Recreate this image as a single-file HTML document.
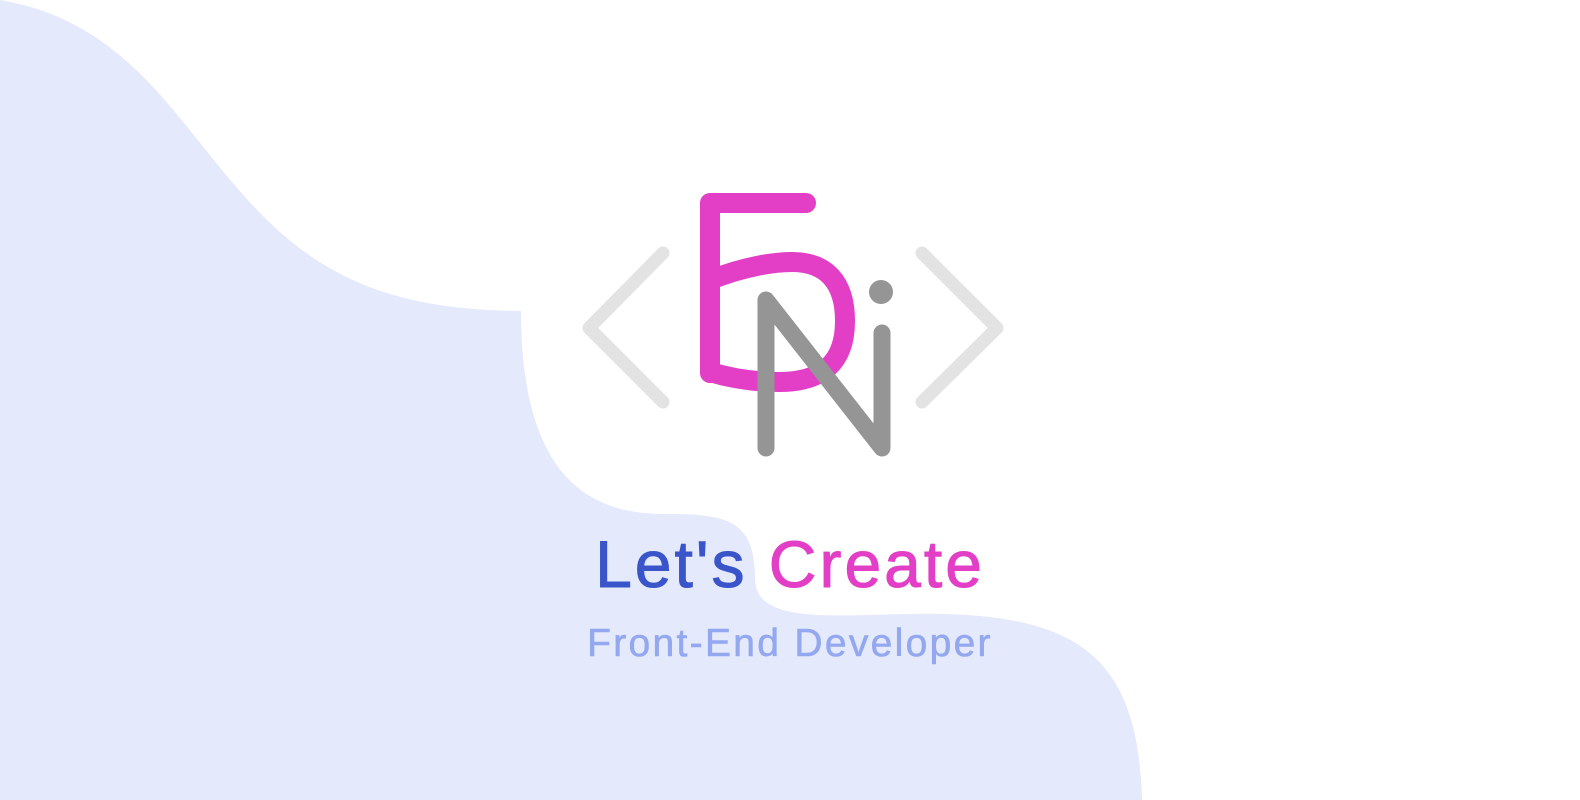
<!DOCTYPE html>
<html><head><style>
html,body{margin:0;padding:0;width:1580px;height:800px;overflow:hidden;background:#fff;}
svg{position:absolute;left:0;top:0}
.t{position:absolute;left:0;width:1580px;text-align:center;font-family:"Liberation Sans",sans-serif;}
</style></head><body>
<svg width="1580" height="800" viewBox="0 0 1580 800">
<path d="M0,0 C120,20 170,110 232,182 C302,265 372,310 521,311 C521,480 592,514 664,514 C724,514 755,518 755,578 C755,622 822,616 905,614 C1075,610 1138,652 1142,800 L0,800 Z" fill="#e4e9fb"/>
<g fill="none" stroke-linecap="round" stroke-linejoin="round">
<path d="M663,253 L589,328 L663,402" stroke="#e3e3e3" stroke-width="13"/>
<path d="M922,253 L997,328 L922,402" stroke="#e3e3e3" stroke-width="13"/>
<path d="M806,203 H710 V373" stroke="#e23fc6" stroke-width="20"/>
<path d="M710,280 C745,266 775,262 792,262 C826,262 845,282 845,321 C845,362 823,382 779,382 C755,382 730,378 710,372" stroke="#e23fc6" stroke-width="20"/>
<path d="M766,448 V300 L882,448 V333" stroke="#959595" stroke-width="17"/>
</g>
<circle cx="881" cy="292" r="12" fill="#959595"/>
</svg>
<div class="t" style="top:526px;font-size:66px;letter-spacing:3px;-webkit-text-stroke:1px;"><span style="color:#3a55c9">Let's</span> <span style="color:#e23fc6">Create</span></div>
<div class="t" style="top:622px;font-size:39px;letter-spacing:2.3px;color:#94a8f0;-webkit-text-stroke:0.6px;">Front-End Developer</div>
</body></html>
